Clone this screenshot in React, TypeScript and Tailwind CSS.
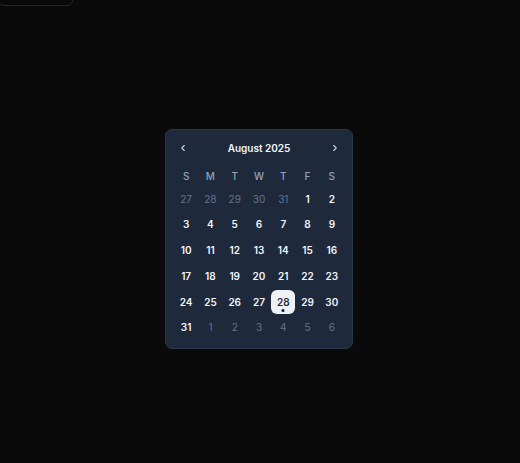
import React from "react";

const weeks: { d: number; out?: boolean; sel?: boolean }[][] = [
  [{ d: 27, out: true }, { d: 28, out: true }, { d: 29, out: true }, { d: 30, out: true }, { d: 31, out: true }, { d: 1 }, { d: 2 }],
  [{ d: 3 }, { d: 4 }, { d: 5 }, { d: 6 }, { d: 7 }, { d: 8 }, { d: 9 }],
  [{ d: 10 }, { d: 11 }, { d: 12 }, { d: 13 }, { d: 14 }, { d: 15 }, { d: 16 }],
  [{ d: 17 }, { d: 18 }, { d: 19 }, { d: 20 }, { d: 21 }, { d: 22 }, { d: 23 }],
  [{ d: 24 }, { d: 25 }, { d: 26 }, { d: 27 }, { d: 28, sel: true }, { d: 29 }, { d: 30 }],
  [{ d: 31 }, { d: 1, out: true }, { d: 2, out: true }, { d: 3, out: true }, { d: 4, out: true }, { d: 5, out: true }, { d: 6, out: true }],
];

export default function App() {
  return (
    <div
      className="relative w-[520px] h-[463px] bg-[#0a0a0a] overflow-hidden flex items-center justify-center"
      style={{ fontFamily: "Inter, 'Noto Sans', sans-serif" }}
    >
      <div className="absolute left-[-2px] top-[-30px] w-[75px] h-[36px] border border-[#262626] rounded-md" />
      <div className="w-[188px] mr-[2px] rounded-[7px] bg-[#1e293b] border border-[#2a374b] px-[8px] pt-[8px] pb-[7px] mt-[15px]">
        <div className="h-[20px] flex items-center justify-between px-[4px]">
          <svg width="10" height="10" viewBox="0 0 24 24" fill="none" stroke="#cbd5e1" strokeWidth="2.6" strokeLinecap="round" strokeLinejoin="round">
            <path d="m15 18-6-6 6-6" />
          </svg>
          <span className="text-[10px] font-semibold text-[#f1f5f9]">August 2025</span>
          <svg width="10" height="10" viewBox="0 0 24 24" fill="none" stroke="#cbd5e1" strokeWidth="2.6" strokeLinecap="round" strokeLinejoin="round">
            <path d="m9 18 6-6-6-6" />
          </svg>
        </div>
        <div className="mt-[8px] grid grid-cols-7 h-[20px] items-center text-[10px] font-medium text-[#94a3b8]">
          {["S", "M", "T", "W", "T", "F", "S"].map((n, i) => (
            <div key={i} className="text-center">{n}</div>
          ))}
        </div>
        <div className="flex flex-col">
          {weeks.map((w, i) => (
            <div key={i} className="grid grid-cols-7 h-[25.8px] items-center">
              {w.map((c, j) => (
                <div key={j} className="flex justify-center">
                  {c.sel ? (
                    <div className="relative w-[24px] h-[24px] rounded-[6px] bg-[#eef1f5] flex items-center justify-center text-[10px] font-semibold text-[#1e293b]">
                      {c.d}
                      <span className="absolute bottom-[2px] left-1/2 -translate-x-1/2 w-[3px] h-[3px] rounded-full bg-[#0f172a]" />
                    </div>
                  ) : (
                    <div className={`w-[24px] h-[24px] flex items-center justify-center text-[10px] ${c.out ? "font-normal text-[#64748b]" : "font-semibold text-[#f1f5f9]"}`}>
                      {c.d}
                    </div>
                  )}
                </div>
              ))}
            </div>
          ))}
        </div>
      </div>
    </div>
  );
}
